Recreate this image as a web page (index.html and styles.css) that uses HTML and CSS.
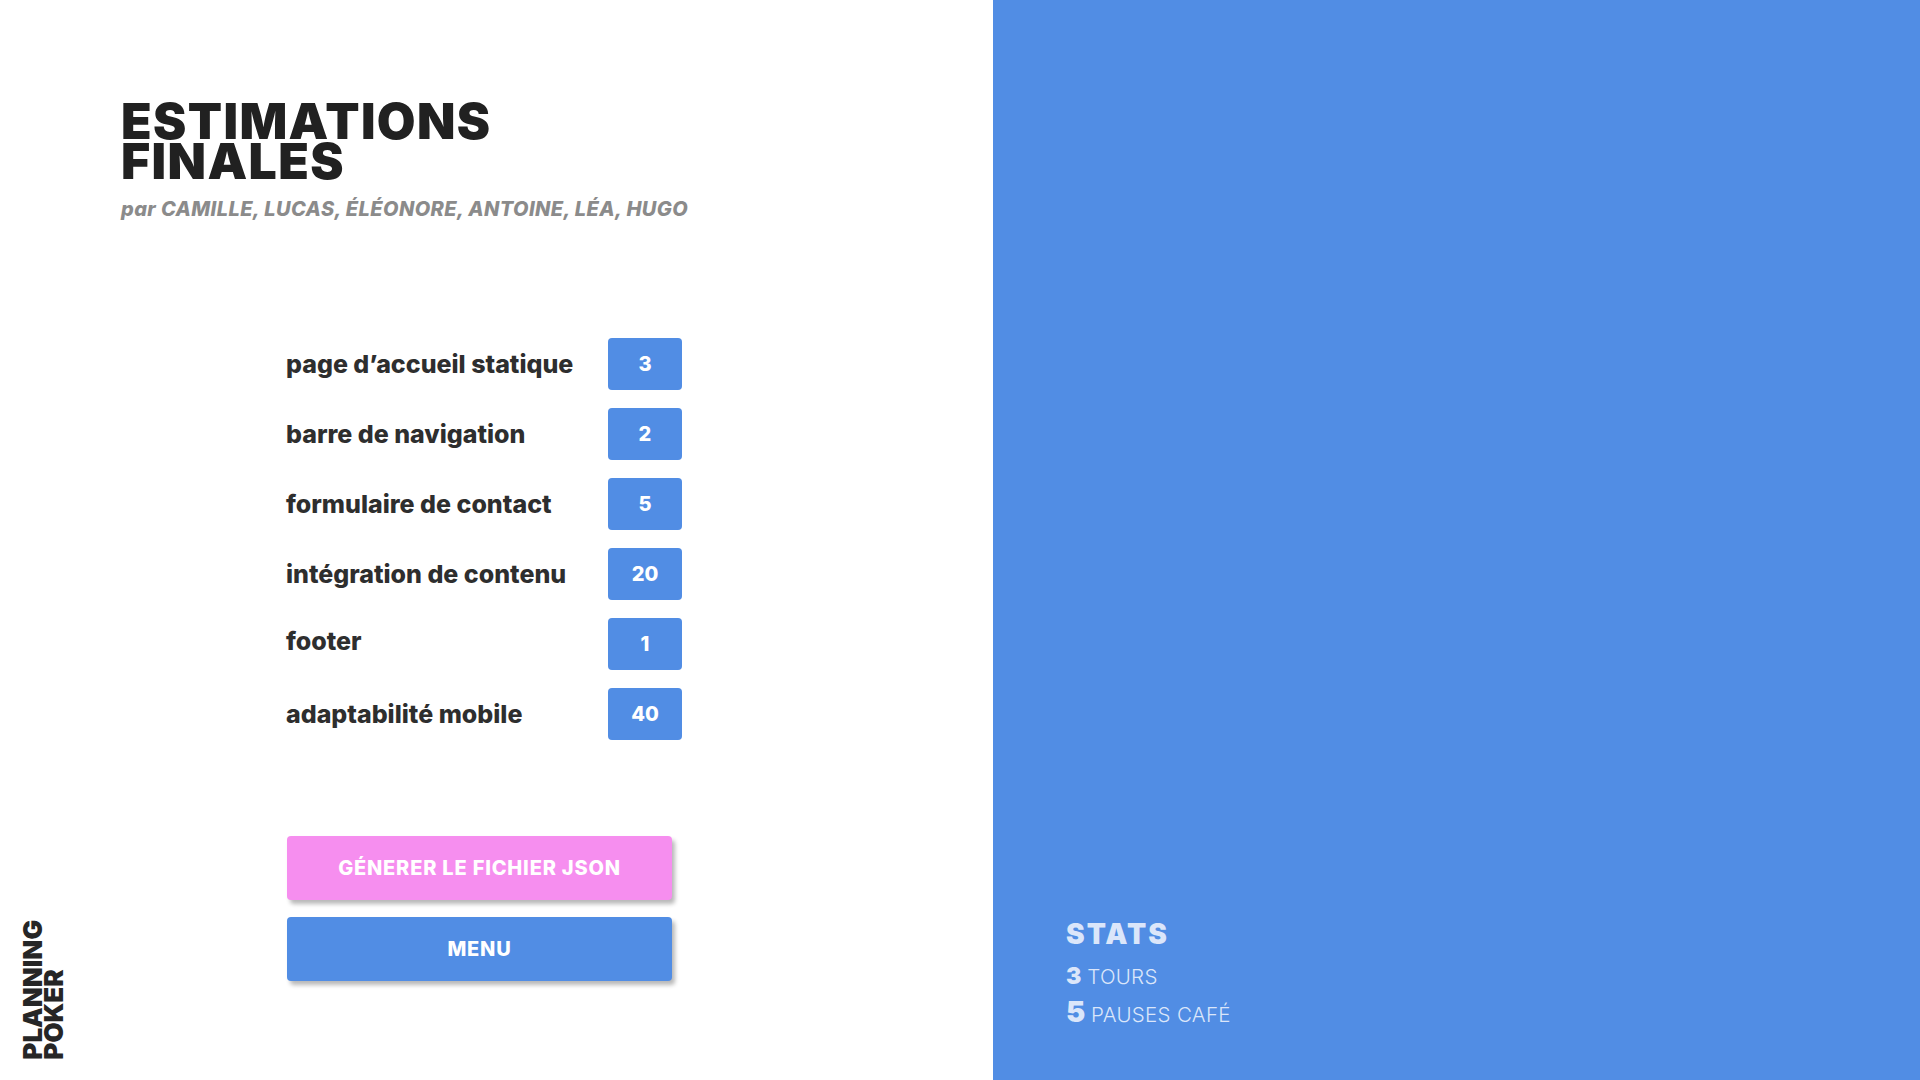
FILE: index.html
```html
<!DOCTYPE html>
<html lang="fr">
<head>
<meta charset="utf-8">
<title>Planning Poker - Estimations finales</title>
<link rel="stylesheet" href="styles.css">
</head>
<body>
<main class="screen">
  <section class="left">
    <header class="head">
      <h1 class="title"><span class="title-line">ESTIMATIONS</span><span class="title-line">FINALES</span></h1>
      <p class="subtitle">par CAMILLE, LUCAS, ÉLÉONORE, ANTOINE, LÉA, HUGO</p>
    </header>

    <ul class="list">
      <li class="row"><span class="label">page d’accueil statique</span><span class="badge">3</span></li>
      <li class="row"><span class="label">barre de navigation</span><span class="badge">2</span></li>
      <li class="row"><span class="label">formulaire de contact</span><span class="badge">5</span></li>
      <li class="row"><span class="label">intégration de contenu</span><span class="badge">20</span></li>
      <li class="row"><span class="label label-up">footer</span><span class="badge">1</span></li>
      <li class="row"><span class="label">adaptabilité mobile</span><span class="badge">40</span></li>
    </ul>

    <div class="actions">
      <button class="btn btn-pink">GÉNERER LE FICHIER JSON</button>
      <button class="btn btn-blue">MENU</button>
    </div>

    <div class="logo">PLANNING<br>POKER</div>
  </section>

  <aside class="right">
    <div class="stats">
      <div class="stats-title">STATS</div>
      <div class="stat stat-first"><span class="num num-sm">3</span> <span class="unit">TOURS</span></div>
      <div class="stat"><span class="num num-lg">5</span> <span class="unit">PAUSES CAFÉ</span></div>
    </div>
  </aside>
</main>
</body>
</html>
```

FILE: styles.css
```css
* { box-sizing: border-box; }

html, body {
  margin: 0;
  padding: 0;
  width: 1920px;
  height: 1080px;
  overflow: hidden;
  background: #ffffff;
  font-family: "Inter", "Noto Sans", sans-serif;
}

.screen {
  display: flex;
  width: 1920px;
  height: 1080px;
}

.left {
  position: relative;
  width: 993px;
  height: 1080px;
  background: #ffffff;
  display: flex;
  flex-direction: column;
}

.head {
  margin: 101px 0 0 121px;
}

.title {
  margin: 0;
  font-size: 50px;
  line-height: 40px;
  font-weight: 900;
  letter-spacing: 1.4px;
  color: #212121;
}

.title-line {
  display: block;
  height: 40px;
}

.subtitle {
  margin: 16px 0 0 0;
  font-size: 20px;
  line-height: 24px;
  font-weight: 800;
  font-style: italic;
  letter-spacing: 0.4px;
  color: #8b8b8b;
}

.list {
  list-style: none;
  margin: 117px 0 0 286px;
  padding: 0;
  display: flex;
  flex-direction: column;
  gap: 18px;
}

.row {
  display: grid;
  grid-template-columns: 322px 74px;
  align-items: center;
  height: 52px;
}

.label {
  font-size: 25px;
  font-weight: 800;
  letter-spacing: 0;
  color: #2e2e2e;
}

.label-up {
  margin-top: -6px;
}

.badge {
  display: flex;
  align-items: center;
  justify-content: center;
  width: 74px;
  height: 52px;
  border-radius: 4px;
  background: #518de4;
  color: #ffffff;
  font-size: 20px;
  font-weight: 800;
}

.actions {
  margin: 96px 0 0 287px;
  display: flex;
  flex-direction: column;
  gap: 17px;
}

.btn {
  width: 385px;
  height: 64px;
  border: none;
  border-radius: 4px;
  color: #ffffff;
  font-family: "Inter", "Noto Sans", sans-serif;
  font-size: 20px;
  font-weight: 800;
  letter-spacing: 0.8px;
  box-shadow: 3px 4px 4px rgba(0, 0, 0, 0.28);
  cursor: pointer;
}

.btn-pink { background: #f68eef; }
.btn-blue { background: #518de4; }

.logo {
  position: absolute;
  left: 22px;
  bottom: 20px;
  writing-mode: vertical-rl;
  transform: rotate(180deg);
  font-size: 26px;
  line-height: 21px;
  font-weight: 900;
  letter-spacing: 0;
  color: #262626;
}

.right {
  flex: 1;
  height: 1080px;
  background: #518de4;
  display: flex;
  flex-direction: column;
  justify-content: flex-end;
  padding: 0 0 46px 73px;
}

.stats {
  color: #dbe6fa;
}

.stats-title {
  font-size: 28px;
  line-height: 38px;
  margin-bottom: 4px;
  font-weight: 900;
  letter-spacing: 2px;
}

.stat {
  font-size: 20.5px;
  line-height: 39px;
  height: 39px;
}

.stat-first {
  height: 38px;
}

.num {
  font-weight: 900;
  line-height: 1;
}

.num-sm { font-size: 23px; }
.num-lg { font-size: 29px; }

.unit {
  font-weight: 300;
  letter-spacing: 0.3px;
}
```
